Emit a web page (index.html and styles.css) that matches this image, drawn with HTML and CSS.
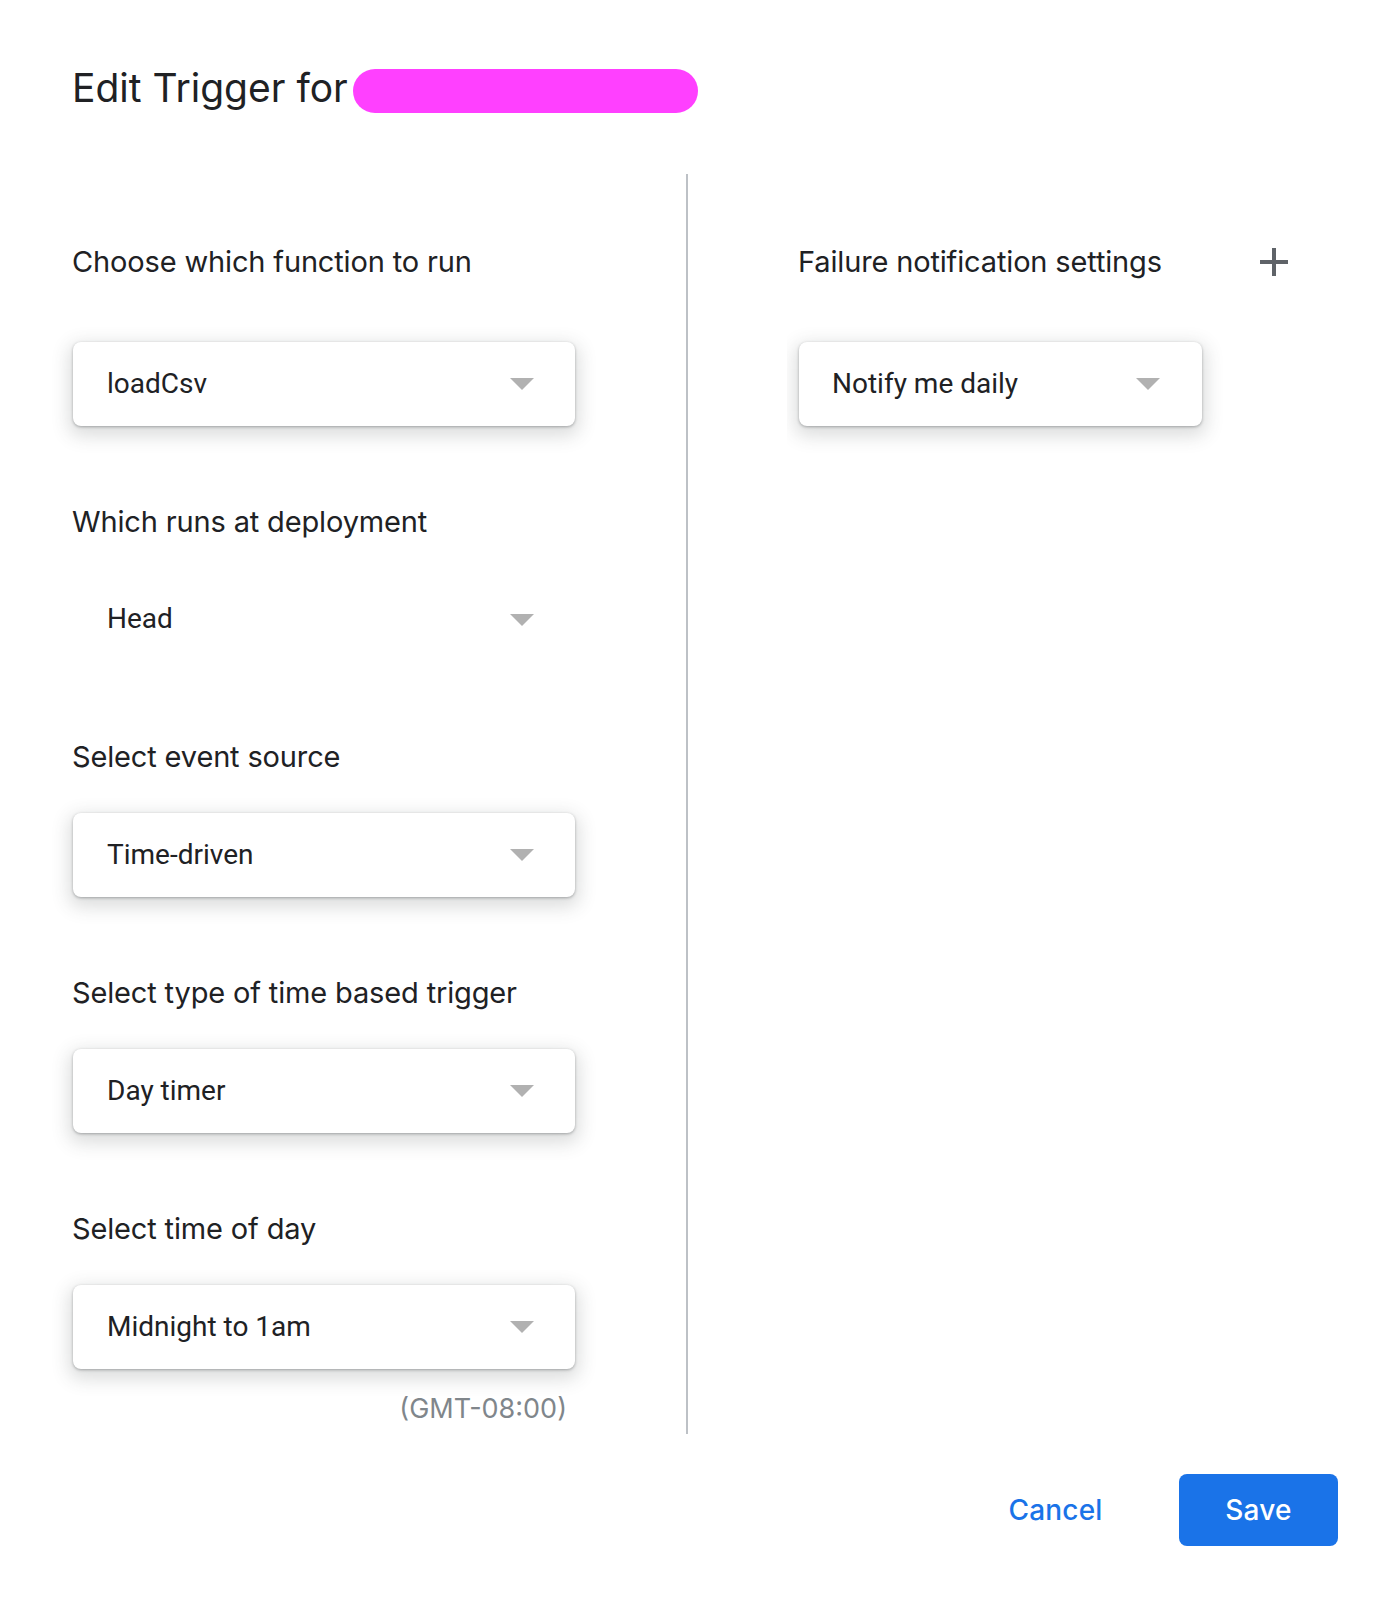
FILE: index.html
```html
<!DOCTYPE html>
<html lang="en">
<head>
<meta charset="utf-8">
<title>Edit Trigger</title>
<link rel="stylesheet" href="styles.css">
</head>
<body>
<div class="dialog">
  <header class="dialog-header">
    <h1 class="dialog-title">Edit Trigger for</h1>
    <span class="redacted"></span>
  </header>

  <main class="dialog-body">
    <section class="col col-left">
      <div class="field field-first">
        <div class="field-label">Choose which function to run</div>
        <div class="select">
          <span class="select-value">loadCsv</span>
          <svg class="select-arrow" viewBox="0 0 24 12" width="24" height="12"><polygon points="0,0 24,0 12,12"/></svg>
        </div>
      </div>

      <div class="field">
        <div class="field-label">Which runs at deployment</div>
        <div class="select select-flat">
          <span class="select-value">Head</span>
          <svg class="select-arrow" viewBox="0 0 24 12" width="24" height="12"><polygon points="0,0 24,0 12,12"/></svg>
        </div>
      </div>

      <div class="field">
        <div class="field-label">Select event source</div>
        <div class="select">
          <span class="select-value">Time-driven</span>
          <svg class="select-arrow" viewBox="0 0 24 12" width="24" height="12"><polygon points="0,0 24,0 12,12"/></svg>
        </div>
      </div>

      <div class="field">
        <div class="field-label">Select type of time based trigger</div>
        <div class="select">
          <span class="select-value">Day timer</span>
          <svg class="select-arrow" viewBox="0 0 24 12" width="24" height="12"><polygon points="0,0 24,0 12,12"/></svg>
        </div>
      </div>

      <div class="field">
        <div class="field-label">Select time of day</div>
        <div class="select">
          <span class="select-value">Midnight to 1am</span>
          <svg class="select-arrow" viewBox="0 0 24 12" width="24" height="12"><polygon points="0,0 24,0 12,12"/></svg>
        </div>
        <div class="timezone">(GMT-08:00)</div>
      </div>
    </section>

    <section class="col col-right">
      <div class="notify-header">
        <div class="field-label">Failure notification settings</div>
        <svg class="plus-icon" viewBox="0 0 28 28" width="28" height="28"><rect x="0" y="12" width="28" height="4"/><rect x="12" y="0" width="4" height="28"/></svg>
      </div>
      <div class="notify-clip">
        <div class="select select-notify">
          <span class="select-value">Notify me daily</span>
          <svg class="select-arrow" viewBox="0 0 24 12" width="24" height="12"><polygon points="0,0 24,0 12,12"/></svg>
        </div>
      </div>
    </section>
  </main>

  <footer class="dialog-footer">
    <button class="btn btn-text" type="button">Cancel</button>
    <button class="btn btn-primary" type="button">Save</button>
  </footer>
</div>
</body>
</html>
```

FILE: styles.css
```css
* { box-sizing: border-box; }

html, body {
  margin: 0;
  padding: 0;
  background: #ffffff;
}

body {
  font-family: "Roboto", "Liberation Sans", sans-serif;
  color: #202124;
}

.dialog {
  width: 1398px;
  padding: 65px 60px 0 72px;
}

.dialog-header {
  display: flex;
  align-items: flex-start;
  height: 44px;
}

.dialog-title {
  margin: 1px 0 0 0;
  font-family: "Inter", "Open Sans", sans-serif;
  font-weight: 400;
  font-size: 39px;
  line-height: 44px;
  letter-spacing: 0;
  color: #202124;
  white-space: nowrap;
}

.redacted {
  display: block;
  width: 345px;
  height: 44px;
  margin: 4px 0 0 5px;
  border-radius: 22px;
  background: #ff40ff;
}

.dialog-body {
  display: grid;
  grid-template-columns: 616px 1fr;
  margin-top: 65px;
}

.col-left {
  border-right: 2px solid #bdc1c6;
  padding: 68px 0 7px 0;
}

.col-right {
  padding: 68px 0 0 110px;
}

.field-label {
  font-family: "Inter", "Open Sans", sans-serif;
  font-size: 29px;
  line-height: 40px;
  color: #202124;
  letter-spacing: -0.15px;
  white-space: nowrap;
}

.field {
  margin-bottom: 76px;
}

.field:last-child {
  margin-bottom: 0;
}

.field .field-label {
  margin-bottom: 36px;
}

.field-first .field-label {
  margin-bottom: 60px;
}

.select {
  display: flex;
  align-items: center;
  justify-content: space-between;
  width: 502px;
  height: 84px;
  margin-left: 1px;
  padding: 0 41px 2px 34px;
  background: #ffffff;
  border-radius: 8px;
  box-shadow: 0 1px 3px rgba(60, 64, 67, 0.4), 0 6px 18px 4px rgba(60, 64, 67, 0.18);
}

.select .select-arrow {
  margin-top: 2px;
}

.select-flat {
  height: 83px;
  background: transparent;
  box-shadow: none;
}

.select-value {
  font-family: "Roboto", "Liberation Sans", sans-serif;
  font-size: 28px;
  color: #202124;
  white-space: nowrap;
}

.select-arrow {
  display: block;
  fill: #b1b1b1;
}

.timezone {
  width: 495px;
  margin-top: 22px;
  text-align: right;
  font-family: "Inter", "Open Sans", sans-serif;
  font-size: 27px;
  line-height: 36px;
  color: #80868b;
}

.notify-header {
  display: flex;
  align-items: center;
  justify-content: space-between;
  width: 491px;
  height: 40px;
}

.plus-icon {
  display: block;
  fill: #5f6368;
  margin-right: 1px;
}

.notify-clip {
  overflow: hidden;
  margin: 40px 0 0 -11px;
  padding: 20px 40px 40px 12px;
  width: 480px;
}

.select-notify {
  width: 403px;
  margin-left: 0;
  padding: 0 42px 2px 33px;
}

.dialog-footer {
  display: flex;
  justify-content: flex-end;
  align-items: center;
  gap: 44px;
  margin-top: 40px;
}

.btn {
  width: 159px;
  height: 72px;
  border: none;
  border-radius: 8px;
  font-family: "Inter", "Open Sans", sans-serif;
  font-size: 28px;
  font-weight: 500;
  letter-spacing: 0.2px;
  cursor: pointer;
}

.btn-text {
  background: transparent;
  color: #1a73e8;
}

.btn-primary {
  background: #1a73e8;
  color: #ffffff;
}
```
